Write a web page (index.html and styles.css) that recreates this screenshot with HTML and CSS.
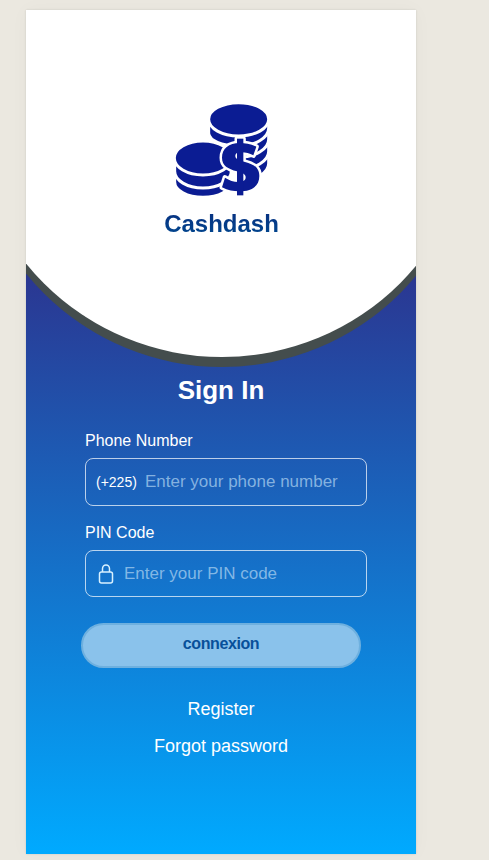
FILE: index.html
```html
<!DOCTYPE html>
<html lang="en">
<head>
<meta charset="utf-8">
<title>Cashdash</title>
<link rel="stylesheet" href="styles.css">
</head>
<body>
<main class="screen">
  <header class="hero">
    <svg class="logo" viewBox="40 20 294 290">
      <g fill="#0b1c93" stroke="#fff" stroke-width="9">
        <path d="M235 170V258A92 54 0 0 0 327 204V170Z"/>
        <path d="M235 140V222A92 54 0 0 0 327 168V140Z"/>
        <path d="M235 100V186A92 54 0 0 0 327 132V100Z"/>
        <path d="M147 74V114C150 136 185 151 235 152A92 54 0 0 0 327 98V74Z"/>
        <ellipse cx="237" cy="72" rx="90" ry="50"/>
        <path d="M45 220V260A85 46 0 0 0 215 260V220Z"/>
        <path d="M45 188V228A85 50 0 0 0 215 228V188Z"/>
        <ellipse cx="130" cy="188" rx="86" ry="51"/>
      </g>
      <g class="dollar-edge">
        <path d="M290 154C272 145 256 143 241 143C207 143 187 160 187 187C187 212 205 220 232 228C252 234 258 238 258 246C258 256 249 260 236 260C222 260 209 255 196 247L187 276C205 286 222 288 238 288C277 288 299 272 299 242C299 216 282 207 256 200C234 194 227 190 227 182C227 174 234 171 246 171C258 171 270 175 281 180Z"/>
        <path d="M232 130H251V300H232Z"/>
      </g>
      <g class="dollar">
        <path d="M290 154C272 145 256 143 241 143C207 143 187 160 187 187C187 212 205 220 232 228C252 234 258 238 258 246C258 256 249 260 236 260C222 260 209 255 196 247L187 276C205 286 222 288 238 288C277 288 299 272 299 242C299 216 282 207 256 200C234 194 227 190 227 182C227 174 234 171 246 171C258 171 270 175 281 180Z"/>
        <path d="M232 130H251V300H232Z"/>
      </g>
    </svg>
    <h1 class="brand">Cashdash</h1>
  </header>
  <section class="content">
    <h2 class="title">Sign In</h2>
    <form class="form">
      <label class="label" for="phone">Phone Number</label>
      <div class="field">
        <span class="prefix">(+225)</span>
        <input id="phone" type="tel" placeholder="Enter your phone number">
      </div>
      <label class="label" for="pin">PIN Code</label>
      <div class="field field-pin">
        <svg class="lock" viewBox="0 0 16 20"><path d="M4.500 8V4.800a3.500 3.800 0 0 1 7 0V8"/><rect x="1.500" y="8" width="13" height="11" rx="2"/></svg>
        <input id="pin" type="password" placeholder="Enter your PIN code">
      </div>
      <button class="submit" type="button">connexion</button>
    </form>
    <nav class="links"><a>Register</a><a>Forgot password</a></nav>
  </section>
</main>
</body>
</html>
```
FILE: styles.css
```css
* { box-sizing: border-box; }
body {
  margin: 0;
  height: 860px;
  padding: 10px 0 0 26px;
  overflow: hidden;
  background: #ebe8e0;
  font-family: "Liberation Sans", Arial, sans-serif;
}
.screen {
  width: 390px;
  height: 844px;
  overflow: hidden;
  background: linear-gradient(#2b3590 258px, #00aaff 844px);
  box-shadow: 0 0 2px rgba(0, 0, 0, .12), 0 0 18px rgba(0, 0, 0, .03);
}
.hero {
  width: 504px;
  height: 504px;
  margin: -157px 0 0 -56.500px;
  padding-top: 247px;
  border-radius: 50%;
  background: #fff;
  box-shadow: 0 10px 0 #444d4d;
  text-align: center;
}
.logo { display: block; width: 98px; height: 96.700px; margin: 1.500px auto 0; }
.dollar { fill: #0b1c93; }
.dollar-edge { fill: #fff; stroke: #fff; stroke-width: 15; stroke-linejoin: round; }
.brand {
  margin: 12px 0 0;
  font-size: 24px;
  line-height: 28px;
  color: transparent;
  background: linear-gradient(#082f80, #004990);
  -webkit-background-clip: text;
  background-clip: text;
}
.content { padding: 17px 55px 0; color: #fff; }
.title { margin: 0; font-size: 26px; line-height: 32px; text-align: center; }
.form { display: flex; flex-direction: column; margin-top: 26px; padding-left: 4px; }
.label { font-size: 16px; line-height: 18px; }
.field {
  display: flex;
  align-items: center;
  width: 282px;
  height: 48px;
  margin: 8px 0 18px;
  padding-left: 10px;
  border: 1px solid rgba(255, 255, 255, .7);
  border-radius: 8px;
}
.prefix { width: 49px; font-size: 14px; line-height: 16px; }
.field input {
  flex: 1;
  min-width: 0;
  padding: 0;
  border: 0;
  outline: 0;
  background: transparent;
  color: #fff;
  font: 17px/20px "Liberation Sans", Arial, sans-serif;
}
.field input::placeholder { color: rgba(180, 215, 242, .7); opacity: 1; }
.field-pin { height: 47px; margin-bottom: 26px; }
.lock {
  width: 16px;
  height: 20px;
  margin: 0 10px 0 2px;
  fill: none;
  stroke: #d9f1ff;
  stroke-width: 1.500;
}
.submit {
  width: 280px;
  height: 45px;
  margin-left: -4px;
  padding: 0 0 3px;
  border: 2px solid #6eb0df;
  border-radius: 23px;
  background: #8ac2eb;
  color: #07509a;
  font: bold 16px "Liberation Sans", Arial, sans-serif;
  letter-spacing: -.4px;
}
.links {
  display: flex;
  flex-direction: column;
  align-items: center;
  gap: 17px;
  margin-top: 31px;
  font-size: 18px;
  line-height: 20px;
}
```
